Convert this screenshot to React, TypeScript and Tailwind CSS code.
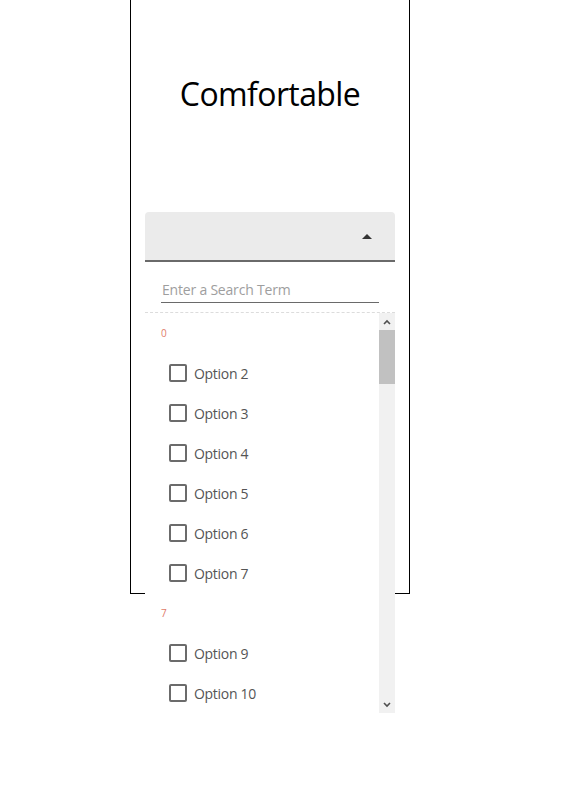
import React from 'react';

const groups = [
  { label: '0', options: ['Option 2', 'Option 3', 'Option 4', 'Option 5', 'Option 6', 'Option 7'] },
  { label: '7', options: ['Option 9', 'Option 10'] },
];

const Checkbox: React.FC = () => (
  <div className="w-[18px] h-[18px] rounded-[2px] border-2 border-[#6b6b6b] bg-white shrink-0" />
);

const App: React.FC = () => {
  return (
    <div className="w-[579px] h-[811px] bg-white overflow-hidden" style={{ fontFamily: '"Open Sans", "Noto Sans", sans-serif' }}>
      <div className="ml-[130px] w-[280px] h-[594px] border-x border-b border-black relative">
        <div className="pt-[72px] text-center text-[32px] leading-[44px] text-black tracking-[-0.6px]">Comfortable</div>

        <div className="absolute left-[14px] top-[212px] w-[250px] z-10">
          <div className="h-[50px] bg-[#ebebeb] rounded-t-[4px] border-b-2 border-[#6a6a6a] flex items-center justify-end pr-[23px]">
            <div className="w-0 h-0 border-x-[5px] border-x-transparent border-b-[5px] border-b-[#333]" />
          </div>
          <div className="bg-white">
            <div className="px-4 pt-[18px] pb-[9px] border-b border-dashed border-[#dcdcdc]">
              <div className="border-b border-[#6a6a6a] pb-[2px] text-[14px] leading-[20px] text-[#9e9e9e] pl-[1px] tracking-[-0.2px]">Enter a Search Term</div>
            </div>
            <div className="flex h-[400px]">
              <div className="flex-1 overflow-hidden">
                {groups.map((g) => (
                  <div key={g.label}>
                    <div className="h-[40px] flex items-center pl-4 text-[10px] text-[#e07b6a]">{g.label}</div>
                    {g.options.map((o) => (
                      <div key={o} className="h-[40px] flex items-center gap-[7px] pl-6 text-[14px] text-[#555] tracking-[-0.3px]">
                        <Checkbox />
                        <span>{o}</span>
                      </div>
                    ))}
                  </div>
                ))}
              </div>
              <div className="w-[16px] bg-[#f1f1f1] flex flex-col">
                <div className="h-[17px] flex items-center justify-center">
                  <svg width="8" height="6" viewBox="0 0 8 6"><path d="M1 5 L4 2 L7 5" stroke="#505050" strokeWidth="1.6" fill="none" /></svg>
                </div>
                <div className="h-[54px] bg-[#c1c1c1]" />
                <div className="flex-1" />
                <div className="h-[17px] flex items-center justify-center">
                  <svg width="8" height="6" viewBox="0 0 8 6"><path d="M1 1 L4 4 L7 1" stroke="#505050" strokeWidth="1.6" fill="none" /></svg>
                </div>
              </div>
            </div>
          </div>
        </div>
      </div>
    </div>
  );
};

export default App;
